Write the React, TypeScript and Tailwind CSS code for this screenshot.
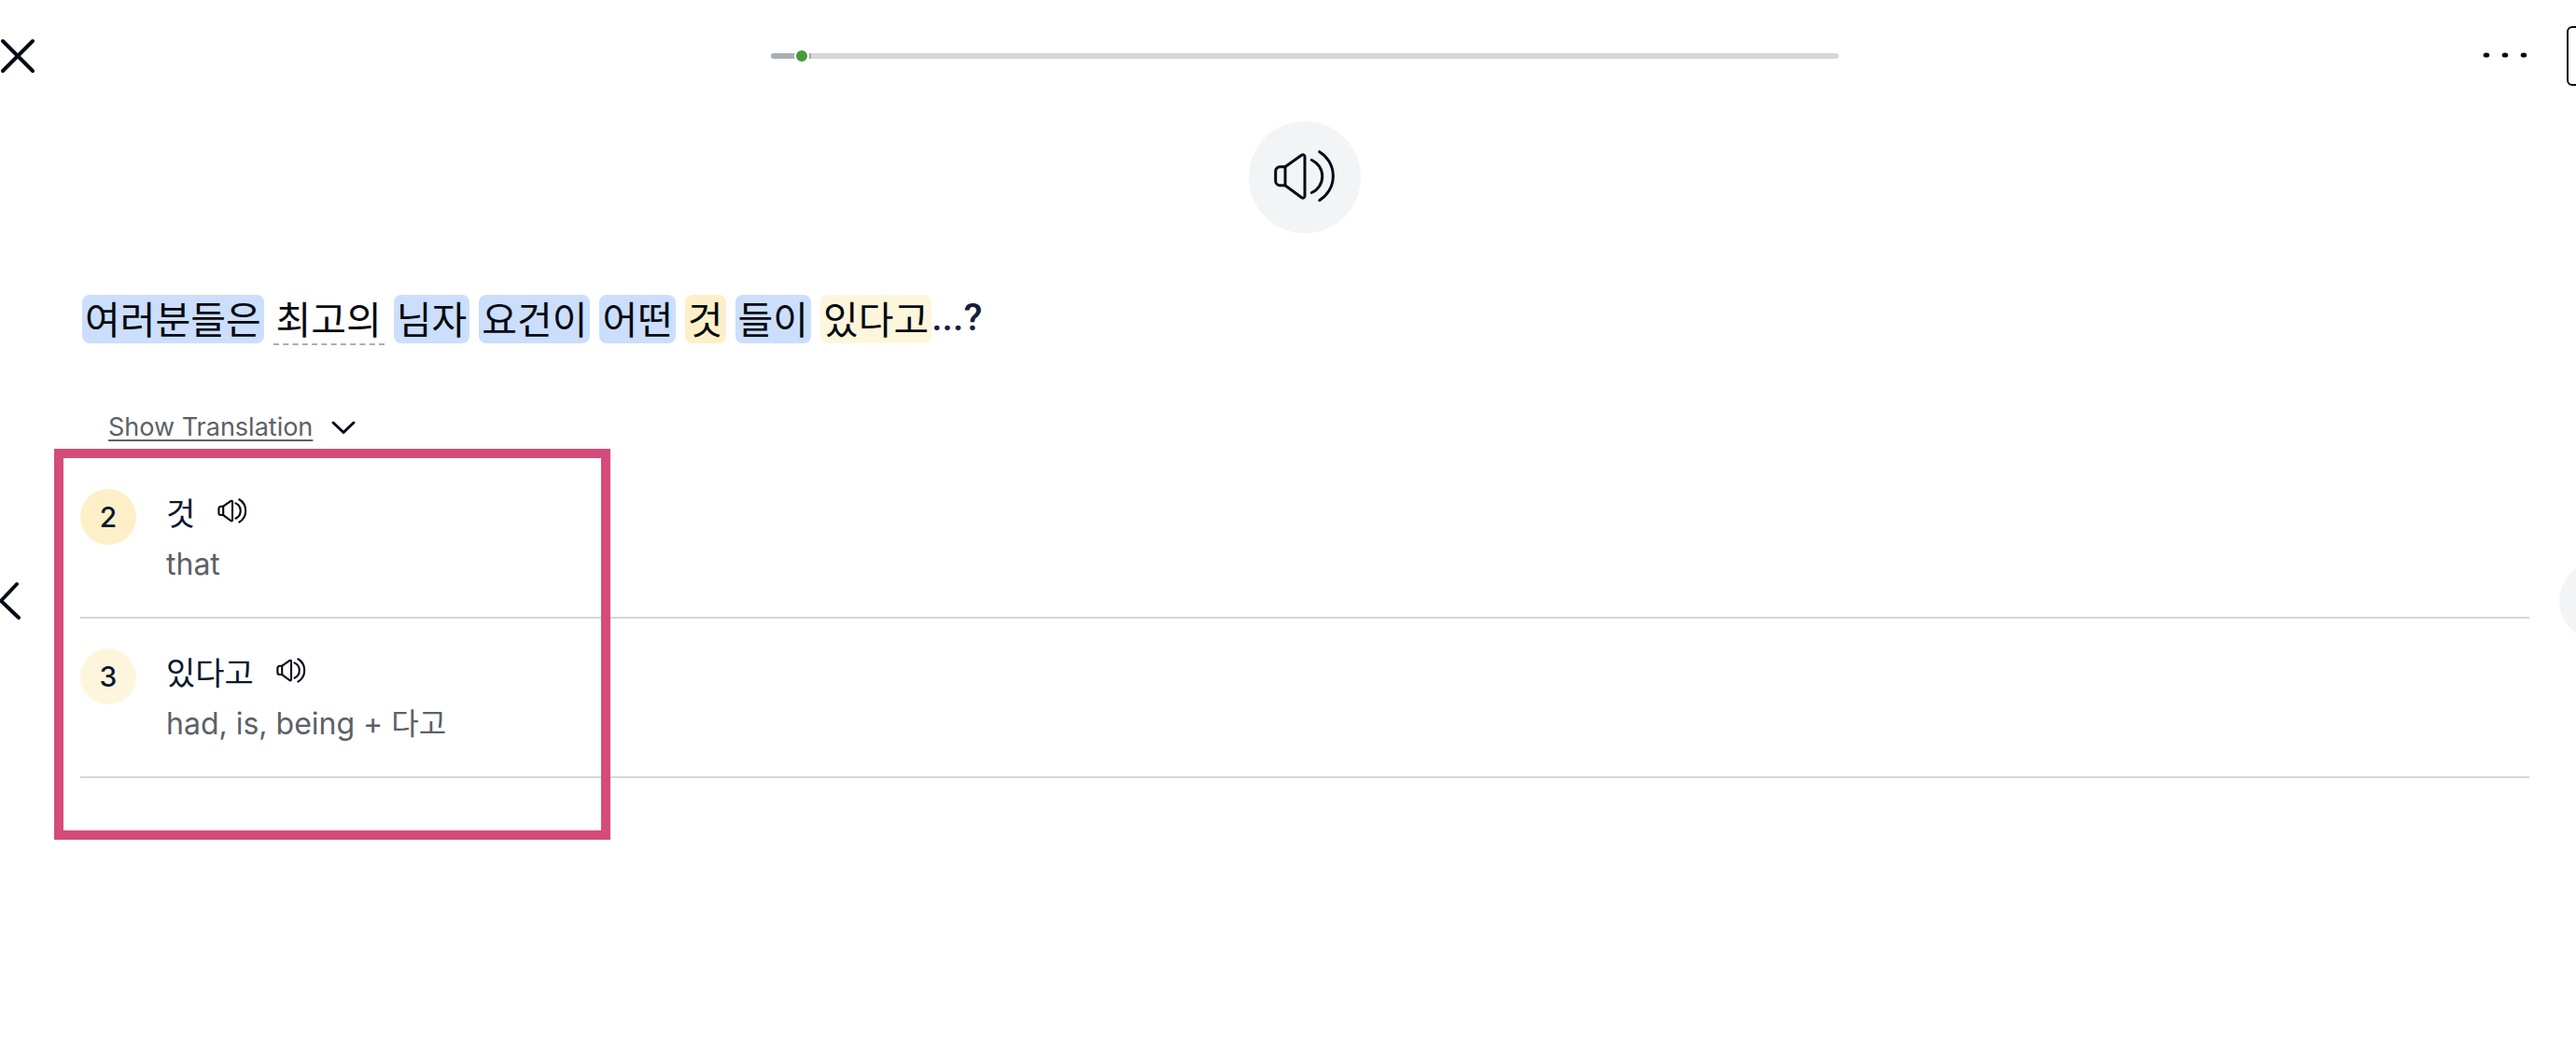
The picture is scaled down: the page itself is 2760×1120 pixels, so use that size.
import React from "react";

type Tone = "blue" | "gold" | "cream" | "plain";

const toneClass: Record<Tone, string> = {
  blue: "bg-[#cbdefc]",
  gold: "bg-[#fdf0c8]",
  cream: "bg-[#fef6dc]",
  plain: "",
};

const words: { text: string; tone: Tone }[] = [
  { text: "여러분들은", tone: "blue" },
  { text: "최고의", tone: "plain" },
  { text: "님자", tone: "blue" },
  { text: "요건이", tone: "blue" },
  { text: "어떤", tone: "blue" },
  { text: "것", tone: "gold" },
  { text: "들이", tone: "blue" },
  { text: "있다고", tone: "cream" },
];

const entries: { level: number; term: string; meaning: string; tone: Tone }[] = [
  { level: 2, term: "것", meaning: "that", tone: "gold" },
  { level: 3, term: "있다고", meaning: "had, is, being + 다고", tone: "cream" },
];

const progress = 3.75;

function SpeakerIcon({ className, stroke }: { className: string; stroke: number }) {
  return (
    <svg
      viewBox="0 0 68 60"
      className={className}
      fill="none"
      stroke="currentColor"
      strokeWidth={stroke}
      strokeLinecap="round"
      strokeLinejoin="round"
      aria-hidden="true"
    >
      <path d="M13 18.7H7.5a4.8 4.8 0 0 0-4.8 4.8v10.4a4.8 4.8 0 0 0 4.8 4.8H13z" />
      <path d="M13 18.7 30.6 6.3c1.7-1.1 3.4-.3 3.4 1.7v42c0 2-1.7 2.8-3.4 1.7L13 38.7" />
      <path d="M41.3 11.5a19.1 19.1 0 0 1 0 35" />
      <path d="M49.7 2.7a30.4 30.4 0 0 1 0 52" />
    </svg>
  );
}

function Header() {
  return (
    <header className="grid h-[120px] grid-cols-[86px_1fr_50px] items-center overflow-hidden">
      <button type="button" aria-label="Close" className="w-10 text-[#030b16]">
        <svg viewBox="0 0 40 40" className="size-10" fill="none" stroke="currentColor" strokeWidth="4" strokeLinecap="round" aria-hidden="true">
          <path d="M3 4 35 36M35 4 3 36" />
        </svg>
      </button>
      <div className="grid grid-cols-[11fr_17fr_11fr] items-center">
        <div
          role="progressbar"
          aria-label="Lesson progress"
          aria-valuenow={progress}
          aria-valuemin={0}
          aria-valuemax={100}
          className="col-start-2 h-1.5 rounded-sm bg-[#d5d7db]"
        >
          <div className="relative h-full rounded-l-sm bg-[#a9afb6]" style={{ width: `${progress}%` }}>
            <span className="absolute -top-[5px] right-0.5 size-4 rounded-full border-2 border-white bg-[#449c38]" />
          </div>
        </div>
        <button type="button" aria-label="More options" className="mr-0.5 justify-self-end text-[#030b16]">
          <svg viewBox="0 0 48 8" className="h-2 w-12" fill="currentColor" aria-hidden="true">
            <ellipse cx="4" cy="3" rx="3.3" ry="2.6" />
            <ellipse cx="24" cy="3" rx="3.3" ry="2.6" />
            <ellipse cx="44" cy="3" rx="3.3" ry="2.6" />
          </svg>
        </button>
      </div>
      <button
        type="button"
        aria-label="Toggle sidebar"
        className="-mr-14 ml-10 h-16 rounded-md border-2 border-[#030b16]"
      />
    </header>
  );
}

function Sentence() {
  return (
    <p
      lang="ko"
      className="mt-[66px] flex flex-wrap gap-x-[10px] pl-0.5 text-[41px] leading-[48px] text-[#060a10] font-['Noto_Sans_CJK_KR',sans-serif]"
    >
      {words.map((word, i) => (
        <span key={word.text} className="flex">
          <span
            className={`border-b-2 ${word.tone === "plain" ? "border-dashed border-[#a9afb6]" : "border-transparent"}`}
          >
            <span className={`block h-[52px] rounded-lg px-[3px] ${toneClass[word.tone]}`}>{word.text}</span>
          </span>
          {i === words.length - 1 && <span className="font-medium text-[#14203a] font-['Roboto',sans-serif]">...?</span>}
        </span>
      ))}
    </p>
  );
}

function WordList() {
  return (
    <div className="relative mt-2">
      <ul>
        {entries.map((entry) => (
          <li key={entry.level} className="flex gap-8 border-b-2 border-[#d5d7db] pt-8 pb-[29px]">
            <span
              className={`flex size-15 items-center justify-center rounded-full text-[30px] font-medium text-[#0b1830] ${toneClass[entry.tone]}`}
            >
              {entry.level}
            </span>
            <div className="leading-[54px]">
              <div className="flex items-center gap-6 text-[34px] text-[#0b1830]">
                <span lang="ko">{entry.term}</span>
                <button type="button" aria-label={`Play ${entry.term}`} className="pb-1.5 text-[#030b16]">
                  <SpeakerIcon className="h-7 w-8" stroke={4.5} />
                </button>
              </div>
              <p className="text-[32px] text-[#5c6166]">{entry.meaning}</p>
            </div>
          </li>
        ))}
      </ul>
      <div className="pointer-events-none absolute -top-[11px] -bottom-[66px] -left-7 w-[596px] border-10 border-[#d54b7a]" />
    </div>
  );
}

export default function App() {
  return (
    <div className="min-h-screen overflow-hidden bg-white font-['Inter','Noto_Sans_CJK_KR',sans-serif]">
      <Header />
      <main className="grid grid-cols-[86px_1fr_50px]">
        <button type="button" aria-label="Previous sentence" className="mt-[503px] w-6 self-start text-[#030b16]">
          <svg viewBox="0 0 24 42" className="h-[42px] w-6" fill="none" stroke="currentColor" strokeWidth="4" strokeLinecap="round" strokeLinejoin="round" aria-hidden="true">
            <path d="M18 3 1 21 20 39" />
          </svg>
        </button>
        <div>
          <button
            type="button"
            aria-label="Play sentence"
            className="mx-auto mt-[10px] flex size-30 items-center justify-center rounded-full bg-[#f3f4f6] text-[#030b16]"
          >
            <SpeakerIcon className="h-[60px] w-[68px]" stroke={3} />
          </button>
          <Sentence />
          <button type="button" className="mt-[62px] ml-[30px] flex h-13 items-center gap-5 text-[27px] text-[#5c6166]">
            <span className="underline decoration-2 underline-offset-4">Show Translation</span>
            <svg viewBox="0 0 26 14" className="h-[14px] w-[26px] text-[#030b16]" fill="none" stroke="currentColor" strokeWidth="3" strokeLinecap="round" strokeLinejoin="round" aria-hidden="true">
              <path d="M2 2 13 12.5 24 2" />
            </svg>
          </button>
          <WordList />
        </div>
        <button
          type="button"
          aria-label="Next sentence"
          className="-mr-12 mt-[482px] ml-8 size-[84px] self-start rounded-full bg-[#f3f4f6]"
        />
      </main>
    </div>
  );
}
